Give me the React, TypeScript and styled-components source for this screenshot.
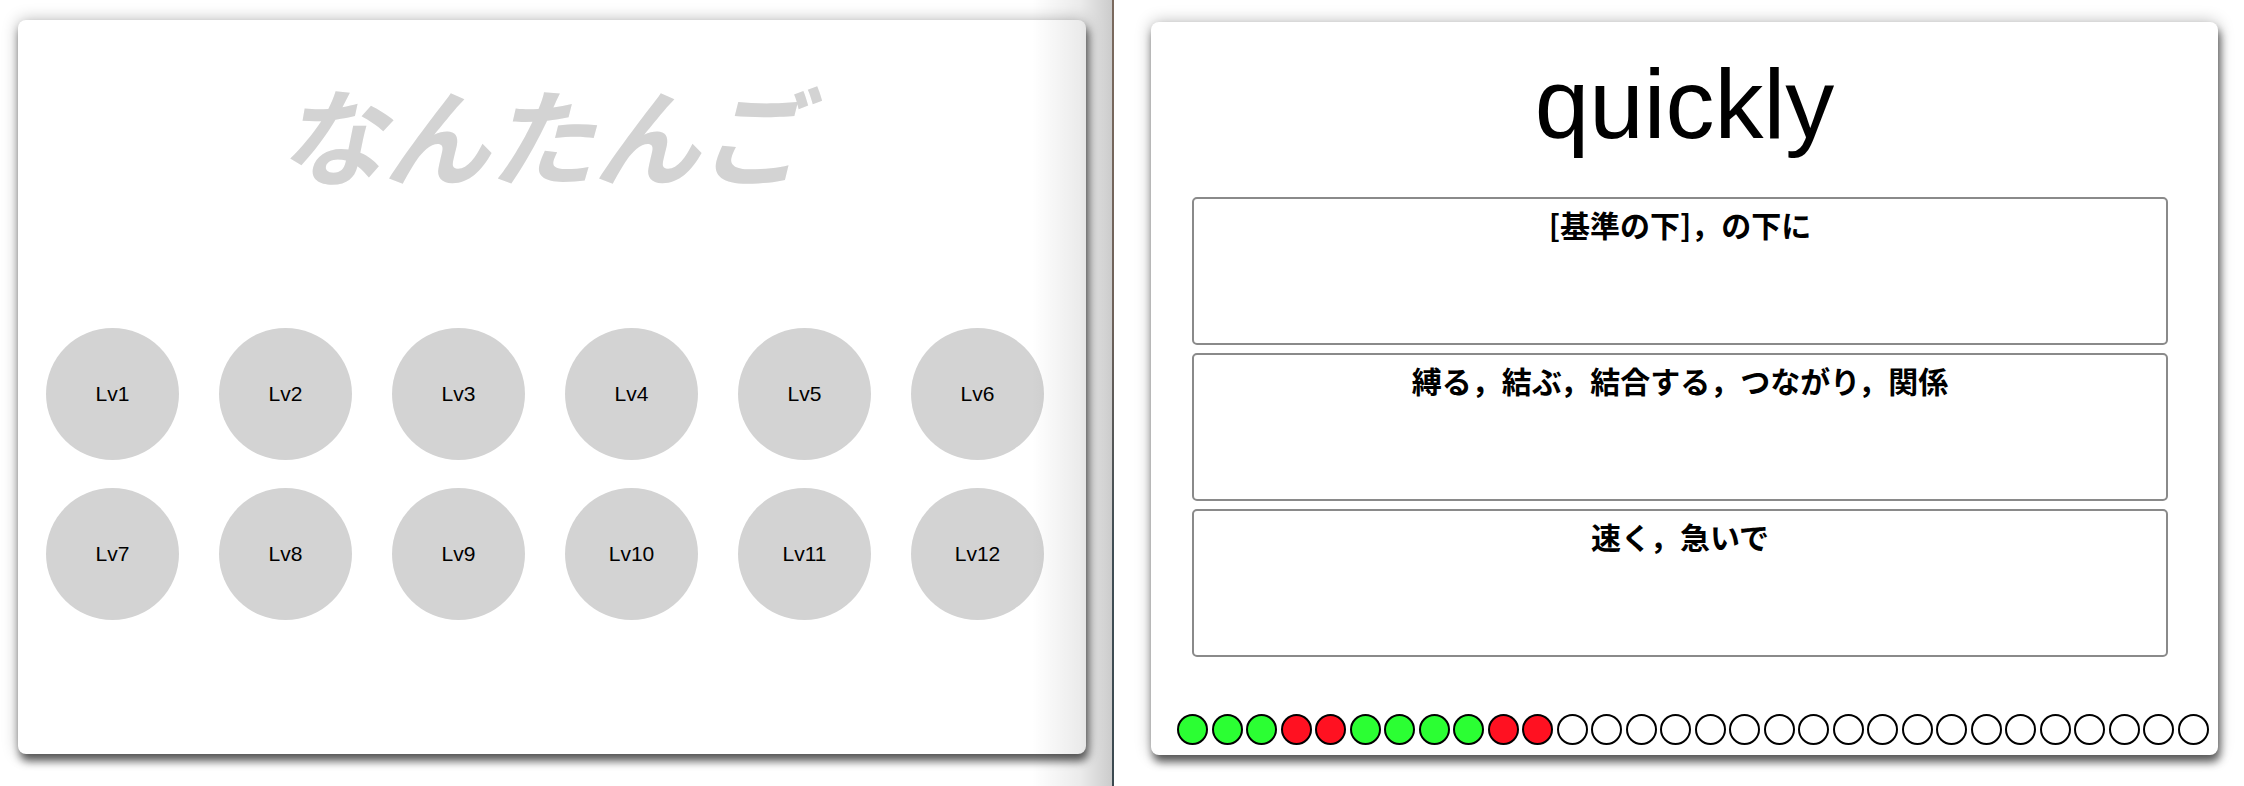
import React from "react";
import styled, { createGlobalStyle } from "styled-components";

const GlobalStyle = createGlobalStyle`
  html, body { margin: 0; padding: 0; background: #ffffff; }
  body { font-family: "Liberation Sans", Arial, sans-serif; }
`;

const Screen = styled.div`
  display: flex;
  width: 2244px;
  height: 786px;
  overflow: hidden;
`;

const LeftPane = styled.div`
  position: relative;
  width: 1112px;
  flex: none;
  box-sizing: border-box;
  padding: 20px 0 0 18px;
  background: #ffffff;
  &::after {
    content: "";
    position: absolute;
    top: 0;
    right: 0;
    bottom: 0;
    width: 80px;
    pointer-events: none;
    background: linear-gradient(to right, rgba(0,0,0,0) 0%, rgba(0,0,0,0.08) 60%, rgba(0,0,0,0.2) 100%);
  }
`;

const Divider = styled.div`
  width: 2px;
  flex: none;
  background: linear-gradient(to bottom, #7b6a5e 0%, #6f625a 40%, #3f4d54 70%, #3c4a50 100%);
`;

const RightPane = styled.div`
  flex: 1;
  box-sizing: border-box;
  padding: 22px 0 0 37px;
  background: #ffffff;
`;

const Card = styled.div<{ $w: number; $h: number }>`
  width: ${(p) => p.$w}px;
  height: ${(p) => p.$h}px;
  box-sizing: border-box;
  background: #ffffff;
  border-radius: 8px;
  box-shadow: 0 0 16px rgba(0, 0, 0, 0.28), 2px 7px 8px rgba(0, 0, 0, 0.6);
  display: flex;
  flex-direction: column;
`;

const AppTitle = styled.h1`
  margin: 49px 0 0;
  padding-right: 22px;
  font-family: "Noto Sans CJK JP", sans-serif;
  font-size: 106px;
  line-height: 127px;
  font-weight: 700;
  font-style: italic;
  color: #d3d3d3;
  text-align: center;
  letter-spacing: -1px;
`;

const LevelGrid = styled.div`
  margin-top: 132px;
  padding-left: 28px;
  display: grid;
  grid-template-columns: repeat(6, 133px);
  column-gap: 40px;
  row-gap: 28px;
`;

const LevelButton = styled.div`
  width: 133px;
  height: 132px;
  border-radius: 50%;
  background: #d3d3d3;
  display: flex;
  align-items: center;
  justify-content: center;
  font-family: "Liberation Sans", Arial, sans-serif;
  font-size: 21px;
  color: #000000;
`;

const Word = styled.div`
  margin: 33px 0 0;
  font-family: "Liberation Sans", Arial, sans-serif;
  font-size: 98px;
  line-height: 98px;
  text-align: center;
  color: #000000;
`;

const Choices = styled.div`
  margin: 44px 0 0 41px;
  width: 976px;
  display: flex;
  flex-direction: column;
  gap: 8px;
`;

const Choice = styled.div`
  height: 148px;
  box-sizing: border-box;
  border: 2px solid #8a8a8a;
  border-radius: 5px;
  padding-top: 7px;
  font-family: "Noto Sans CJK JP", sans-serif;
  font-weight: 700;
  font-size: 30px;
  line-height: 36px;
  text-align: center;
  color: #000000;
`;

const Progress = styled.div`
  margin: auto 0 10px 26px;
  display: flex;
  gap: 3.5px;
`;

const Dot = styled.div<{ $state: "ok" | "ng" | "none" }>`
  width: 31px;
  height: 31px;
  box-sizing: border-box;
  border: 2px solid #000000;
  border-radius: 50%;
  background: ${(p) => (p.$state === "ok" ? "#2bff33" : p.$state === "ng" ? "#ff1121" : "#ffffff")};
`;

const levels = Array.from({ length: 12 }, (_, i) => `Lv${i + 1}`);
const choices = [
  "[基準の下]，の下に",
  "縛る，結ぶ，結合する，つながり，関係",
  "速く，急いで",
];
const results: ("ok" | "ng")[] = ["ok", "ok", "ok", "ng", "ng", "ok", "ok", "ok", "ok", "ng", "ng"];
const dots = Array.from({ length: 30 }, (_, i) => results[i] ?? "none");

export default function App() {
  return (
    <>
      <GlobalStyle />
      <Screen>
        <LeftPane>
          <Card $w={1068} $h={734}>
            <AppTitle>なんたんご</AppTitle>
            <LevelGrid>
              {levels.map((l) => (
                <LevelButton key={l}>{l}</LevelButton>
              ))}
            </LevelGrid>
          </Card>
        </LeftPane>
        <Divider />
        <RightPane>
          <Card $w={1067} $h={733}>
            <Word>quickly</Word>
            <Choices>
              {choices.map((c) => (
                <Choice key={c}>{c}</Choice>
              ))}
            </Choices>
            <Progress>
              {dots.map((d, i) => (
                <Dot key={i} $state={d as "ok" | "ng" | "none"} />
              ))}
            </Progress>
          </Card>
        </RightPane>
      </Screen>
    </>
  );
}
